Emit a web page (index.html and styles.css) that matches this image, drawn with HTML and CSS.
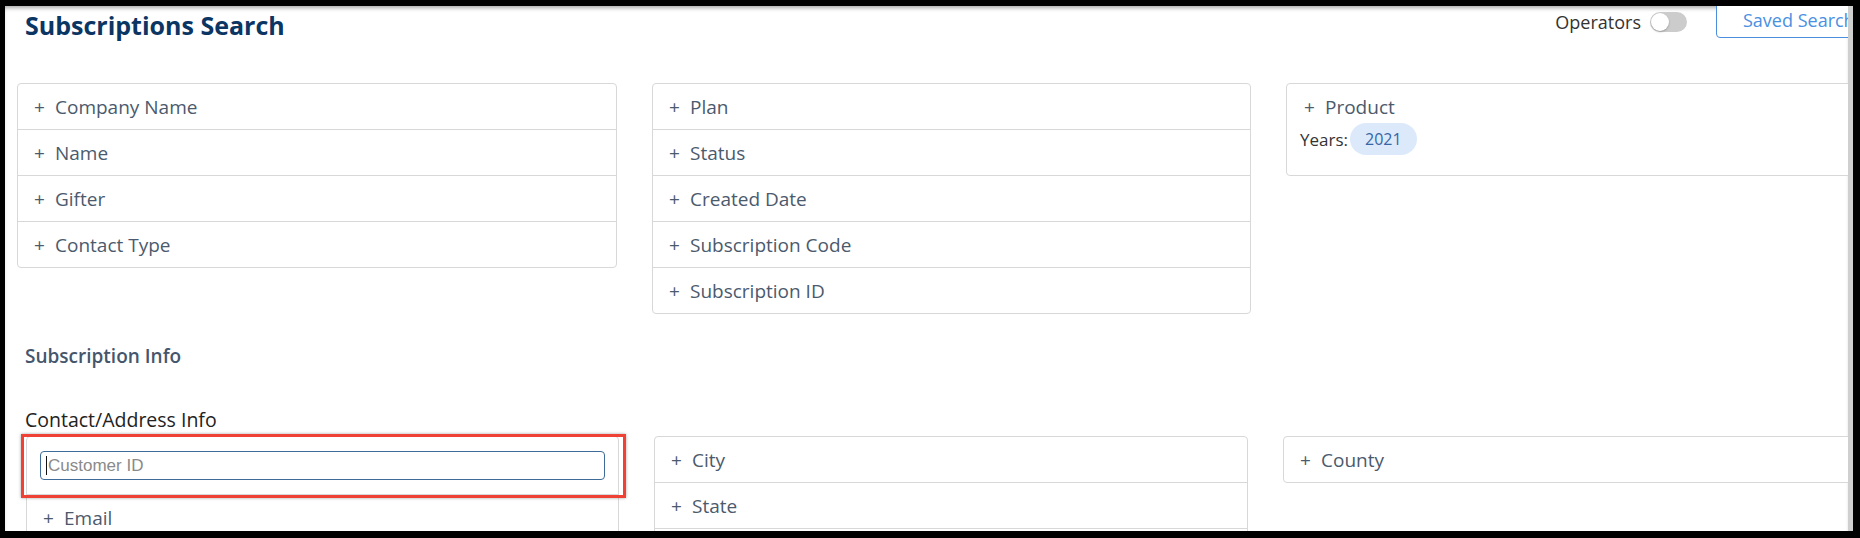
FILE: index.html
```html
<!DOCTYPE html>
<html lang="en">
<head>
<meta charset="utf-8">
<title>Subscriptions Search</title>
<link rel="stylesheet" href="styles.css">
</head>
<body>
<div class="screen">
  <main class="page">
    <header class="head">
      <h1 class="title">Subscriptions Search</h1>
      <div class="ops">
        <span class="ops-label">Operators</span>
        <span class="toggle"><span class="knob"></span></span>
      </div>
      <button class="saved" type="button">Saved Search</button>
    </header>

    <section class="grid grid-top">
      <div class="card">
        <div class="row"><span class="plus">+</span>Company Name</div>
        <div class="row"><span class="plus">+</span>Name</div>
        <div class="row"><span class="plus">+</span>Gifter</div>
        <div class="row"><span class="plus">+</span>Contact Type</div>
      </div>
      <div class="card">
        <div class="row"><span class="plus">+</span>Plan</div>
        <div class="row"><span class="plus">+</span>Status</div>
        <div class="row"><span class="plus">+</span>Created Date</div>
        <div class="row"><span class="plus">+</span>Subscription Code</div>
        <div class="row"><span class="plus">+</span>Subscription ID</div>
      </div>
      <div class="card card-product">
        <div class="product"><span class="plus">+</span>Product</div>
        <div class="years"><span class="years-label">Years:</span><span class="chip">2021</span></div>
      </div>
    </section>

    <h2 class="sec sec-sub">Subscription Info</h2>
    <h2 class="sec sec-contact">Contact/Address Info</h2>

    <section class="grid grid-bottom">
      <div class="card card-hl">
        <div class="row row-input">
          <div class="field"><span class="caret"></span><span class="placeholder">Customer ID</span></div>
        </div>
        <div class="row"><span class="plus">+</span>Email</div>
        <div class="highlight"></div>
      </div>
      <div class="card">
        <div class="row"><span class="plus">+</span>City</div>
        <div class="row"><span class="plus">+</span>State</div>
        <div class="row row-empty"></div>
      </div>
      <div class="card">
        <div class="row"><span class="plus">+</span>County</div>
      </div>
    </section>
  </main>
  <div class="scrollbar"></div>
</div>
</body>
</html>
```

FILE: styles.css
```css
* { box-sizing: border-box; }
html, body { margin: 0; padding: 0; background: #000; }
body { font-family: "Open Sans", "Noto Sans", sans-serif; }

.screen {
  width: 1860px;
  height: 538px;
  background: #000;
  padding: 6px 7px 7px 5px;
  display: flex;
}
.page {
  flex: 1;
  background: #fff;
  overflow: hidden;
  position: relative;
  box-shadow: inset 0 4px 4px -2px rgba(0,0,0,0.35);
}
.scrollbar { width: 5px; background: #cfcfcf; }

/* header */
.head {
  height: 40px;
  display: flex;
  align-items: flex-start;
  padding-left: 20px;
}
.title {
  margin: 3px 0 0 0;
  font-size: 25px;
  line-height: 32px;
  font-weight: 700;
  color: #0b3563;
  flex: 1;
}
.ops {
  display: flex;
  align-items: center;
  gap: 9px;
  margin-top: 4px;
  margin-right: 29px;
}
.ops-label { font-size: 18px; line-height: 24px; color: #333; }
.toggle {
  width: 37px;
  height: 20px;
  border-radius: 10px;
  background: #cccccc;
  position: relative;
  display: block;
}
.knob {
  position: absolute;
  left: 1px;
  top: 1px;
  width: 18px;
  height: 18px;
  border-radius: 50%;
  background: #fff;
  box-shadow: 0 1px 2px rgba(0,0,0,0.25);
}
.saved {
  flex: none;
  width: 180px;
  height: 40px;
  margin-top: -8px;
  margin-right: -48px;
  border: 1px solid #4a8fdf;
  border-radius: 4px;
  background: #fff;
  color: #4a90e2;
  font-family: "Open Sans", sans-serif;
  font-size: 18px;
  text-align: left;
  padding: 4px 0 0 26px;
}

/* grids */
.grid {
  display: grid;
  align-items: start;
}
.grid-top {
  margin-top: 37px;
  padding-left: 12px;
  grid-template-columns: 600px 599px 600px;
  column-gap: 35px;
}
.grid-bottom {
  margin-top: 4px;
  padding-left: 21px;
  grid-template-columns: 593px 594px 600px;
  column-gap: 35px;
}

.card {
  border: 1px solid #d8d8d8;
  border-radius: 4px;
  background: #fff;
  position: relative;
}
.row {
  height: 45px;
  display: flex;
  align-items: center;
  padding-left: 16px;
  font-size: 19px;
  color: #4b5a6d;
}
.row + .row { border-top: 1px solid #d8d8d8; height: 46px; }
.plus { width: 21px; flex: none; }

.card-product { padding: 11px 0 20px 13px; }
.product {
  display: flex;
  align-items: center;
  height: 24px;
  padding-left: 4px;
  font-size: 19px;
  color: #4b5a6d;
}
.years {
  margin-top: 4px;
  display: flex;
  align-items: center;
  gap: 2px;
  font-size: 17px;
}
.years-label { color: #333; }
.chip {
  height: 32px;
  padding: 0 15px;
  border-radius: 16px;
  background: #dce9fb;
  color: #3566a6;
  display: flex;
  align-items: center;
  font-size: 16px;
}

/* section titles */
.sec { margin: 0; padding-left: 20px; line-height: 24px; }
.sec-sub {
  margin-top: 30px;
  font-size: 19px;
  font-weight: 600;
  color: #45566c;
}
.sec-contact {
  margin-top: 40px;
  font-size: 19.5px;
  font-weight: 500;
  color: #222;
}

/* customer id input */
.row-input { height: 57px; padding: 0 13px; }
.field {
  flex: 1;
  height: 29px;
  border: 1px solid #3f6b99;
  border-radius: 4px;
  display: flex;
  align-items: center;
  padding-left: 5px;
  font-family: "Liberation Sans", Arial, sans-serif;
  font-size: 17px;
}
.caret { width: 1px; height: 19px; background: #111; margin-right: 1px; }
.placeholder { color: #8a8a8a; }

.highlight {
  position: absolute;
  left: -6px;
  top: -3px;
  width: 605px;
  height: 64px;
  border: 3px solid #ef4136;
  box-shadow: 0 0 3px rgba(0,0,0,0.35);
  pointer-events: none;
}
```
